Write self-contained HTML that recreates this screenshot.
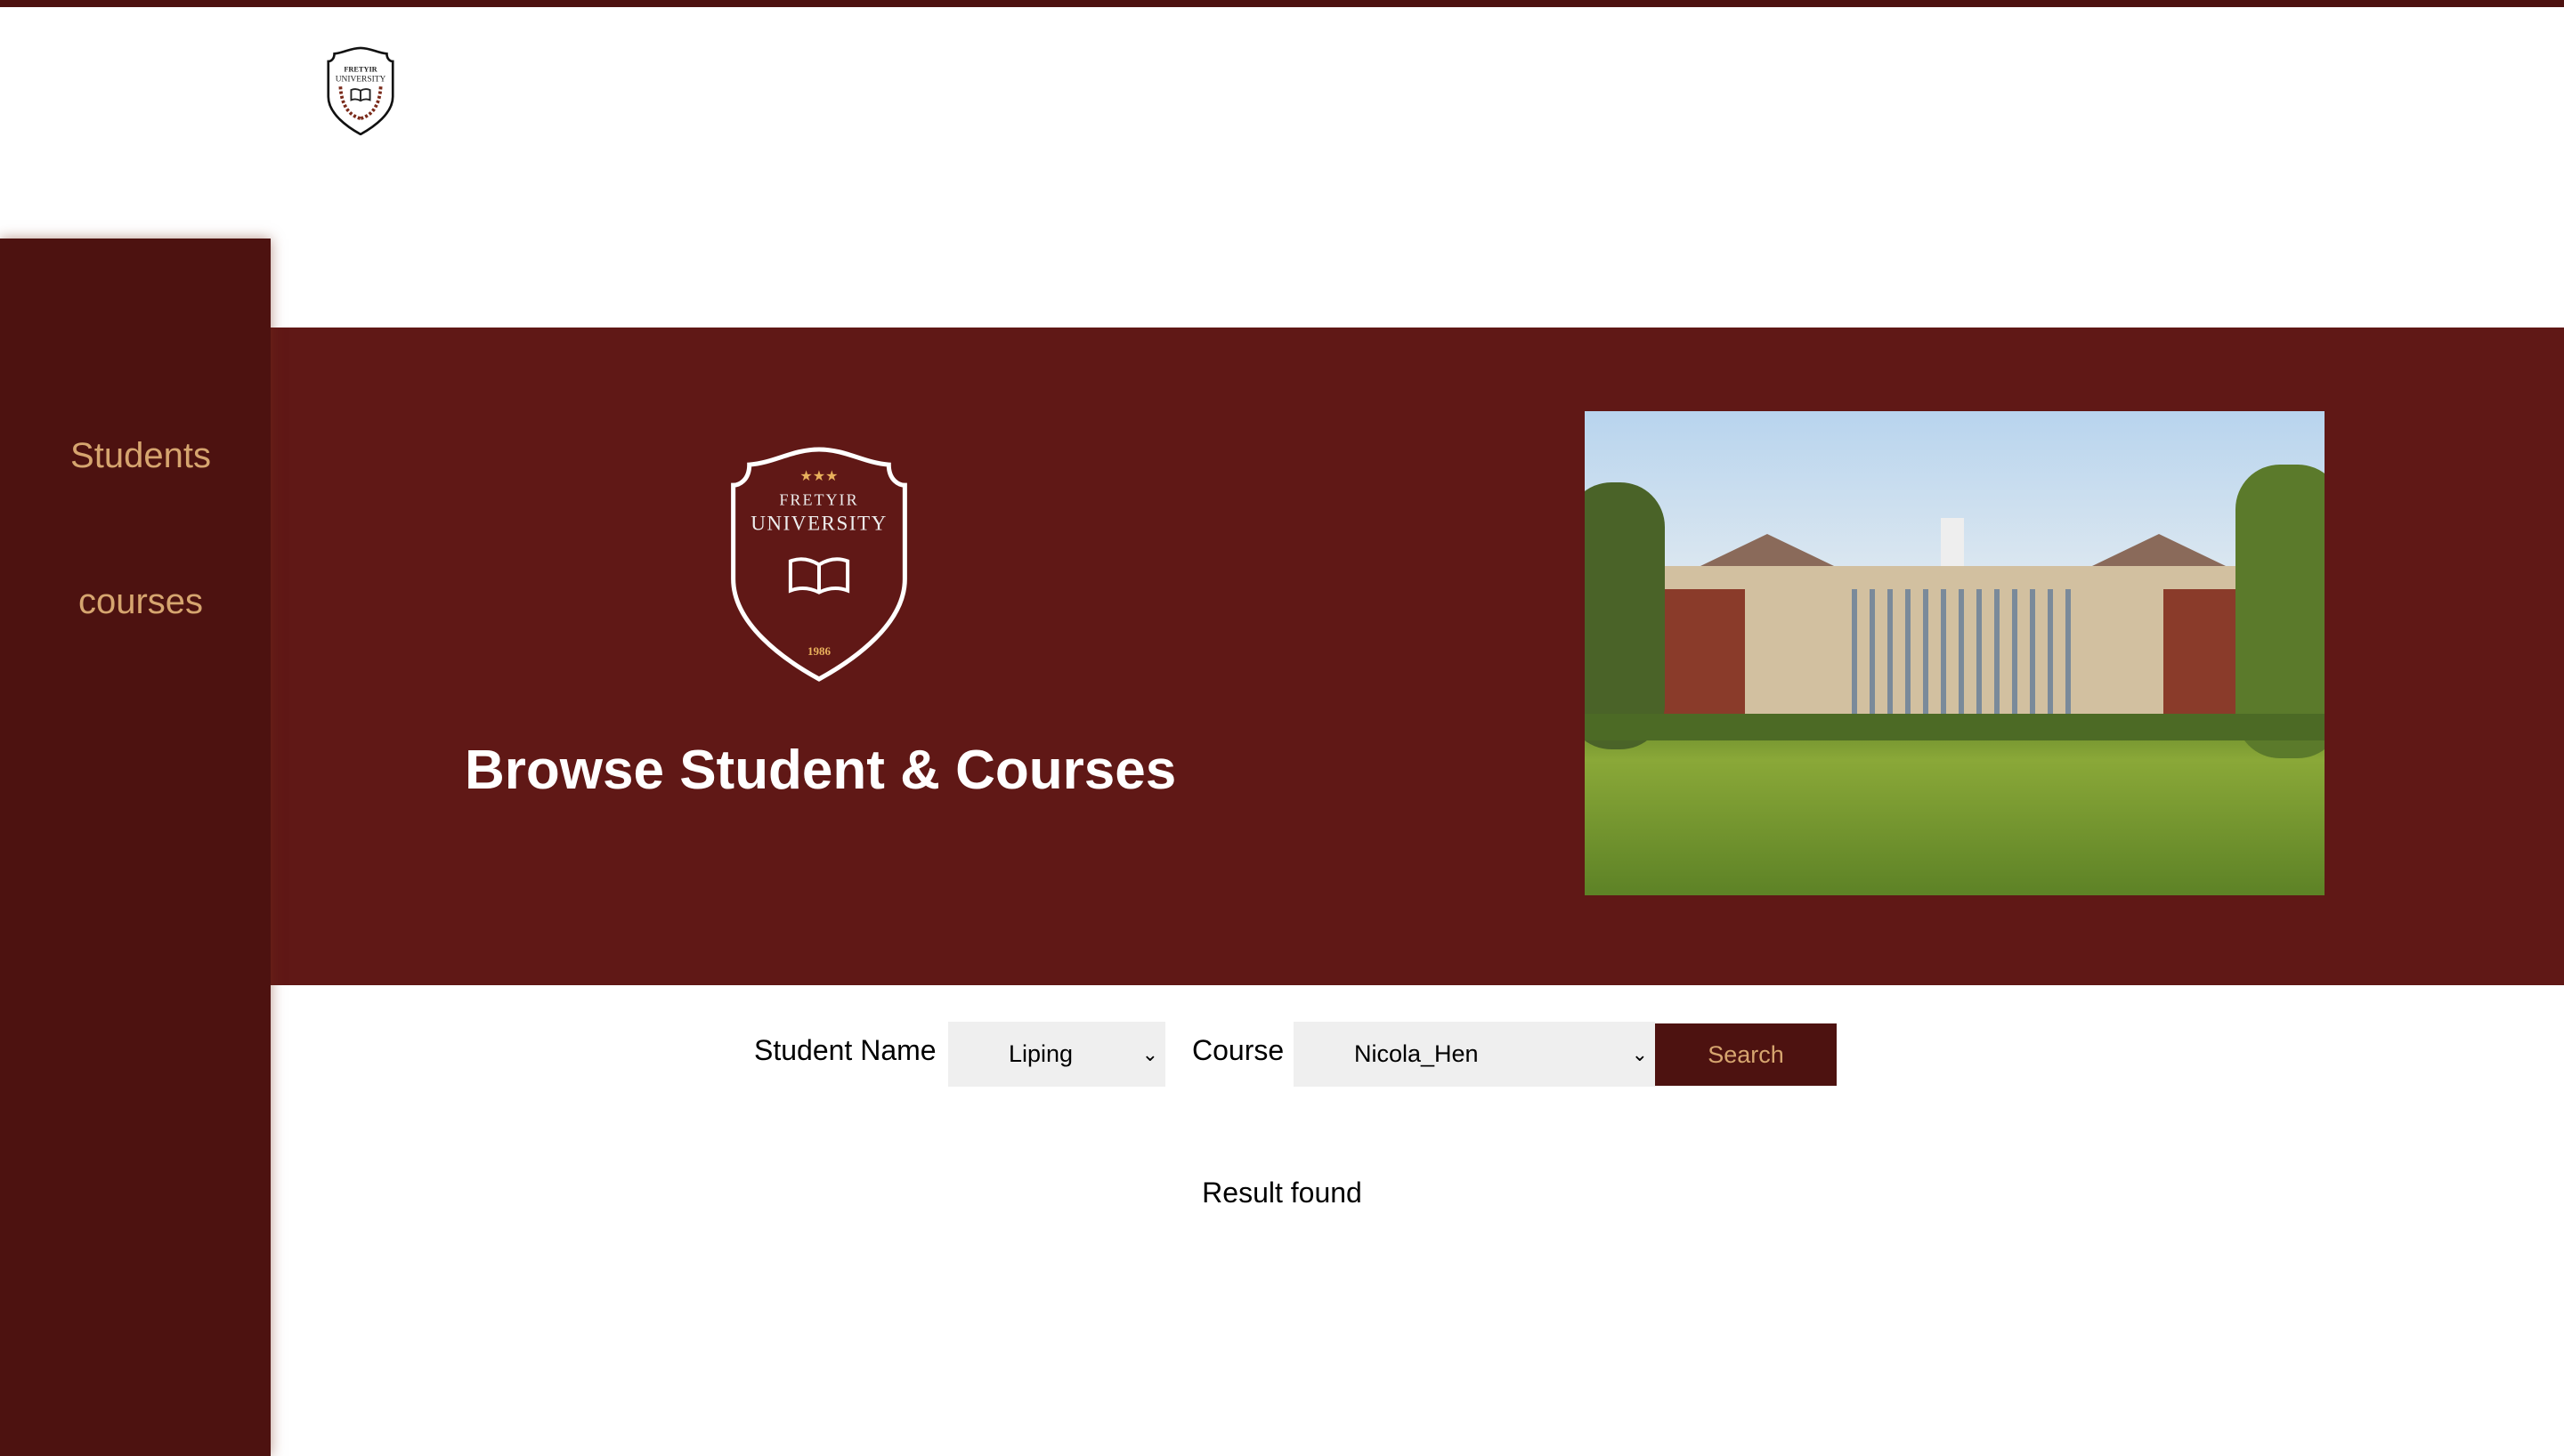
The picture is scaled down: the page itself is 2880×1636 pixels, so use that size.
<!DOCTYPE html>
<html><head><meta charset="utf-8"><style>
*{margin:0;padding:0;box-sizing:border-box}
body{width:2880px;height:1636px;position:relative;background:#fff;font-family:"Liberation Sans",sans-serif;overflow:hidden}
.top{position:absolute;left:0;top:0;width:2880px;height:8px;background:#4d1210}
.side{position:absolute;left:0;top:268px;width:304px;height:1368px;background:#4d1210;box-shadow:0 0 14px rgba(120,50,30,.5);z-index:2}
.side div{position:absolute;left:6px;width:304px;text-align:center;color:#d6a56f;font-size:40px}
.banner{position:absolute;left:304px;top:368px;width:2576px;height:739px;background:#601816}
.title{position:absolute;left:522px;top:830px;color:#fff;font-weight:bold;font-size:62px;white-space:nowrap}
.photo{position:absolute;left:1780px;top:462px;width:831px;height:544px;overflow:hidden;background:linear-gradient(#b8d4ee 0%,#dde8f0 35%,#c9c3a8 55%,#6a8a2c 64%,#8aa838 72%,#5d8226 100%)}
.lbl{position:absolute;font-size:32px;color:#000;top:1162px}
.sel{position:absolute;top:1148px;height:73px;background:#efefef;font-size:27px;line-height:73px}
.btn{position:absolute;left:1859px;top:1150px;width:204px;height:70px;background:#4d1210;color:#d6a56f;font-size:27px;line-height:70px;text-align:center}
</style></head><body>
<div class="top"></div>
<svg style="position:absolute;left:367px;top:52px" width="76" height="100" viewBox="0 0 200 265">
<path d="M100 5 C70 5 50 20 22 22 C22 40 10 45 4 45 L4 150 C4 200 60 240 100 262 C140 240 196 200 196 150 L196 45 C190 45 178 40 178 22 C150 20 130 5 100 5Z" fill="#fff" stroke="#111" stroke-width="7"/>
<text x="100" y="75" font-family="Liberation Serif" font-size="22" text-anchor="middle" fill="#222" font-weight="bold">FRETYIR</text>
<text x="100" y="105" font-family="Liberation Serif" font-size="25" text-anchor="middle" fill="#222">UNIVERSITY</text>
<path d="M72 130 Q86 124 100 132 Q114 124 128 130 L128 160 Q114 154 100 162 Q86 154 72 160Z M100 132 V162" fill="none" stroke="#222" stroke-width="5"/>
<path d="M40 120 Q45 200 100 215 M160 120 Q155 200 100 215" fill="none" stroke="#7a2a1a" stroke-width="10" stroke-dasharray="8 6"/>
</svg>
<div class="side"><div style="top:222px">Students</div><div style="top:386px">courses</div></div>
<div class="banner"></div>
<svg style="position:absolute;left:819px;top:500px" width="202" height="266" viewBox="0 0 200 265">
<path d="M100 5 C70 5 50 20 22 22 C22 40 10 45 4 45 L4 150 C4 200 60 240 100 262 C140 240 196 200 196 150 L196 45 C190 45 178 40 178 22 C150 20 130 5 100 5Z" fill="#601816" stroke="#fff" stroke-width="5"/>
<text x="100" y="40" font-size="16" text-anchor="middle" fill="#e9b15c">★★★</text>
<text x="100" y="67" font-family="Liberation Serif" font-size="18" text-anchor="middle" fill="#eee" letter-spacing="2">FRETYIR</text>
<text x="100" y="95" font-family="Liberation Serif" font-size="23" text-anchor="middle" fill="#eee" letter-spacing="1.5">UNIVERSITY</text>
<path d="M68 130 Q84 124 100 134 Q116 124 132 130 L132 163 Q116 157 100 165 Q84 157 68 163Z M100 134 V165" fill="none" stroke="#fff" stroke-width="4"/>
<text x="100" y="235" font-family="Liberation Serif" font-size="13" font-weight="bold" text-anchor="middle" fill="#e9b15c">1986</text>
</svg>
<div class="title">Browse Student &amp; Courses</div>
<div class="photo">
<div style="position:absolute;left:130px;top:138px;width:0;height:0;border-left:75px solid transparent;border-right:75px solid transparent;border-bottom:36px solid #8a6a5a"></div>
<div style="position:absolute;left:570px;top:138px;width:0;height:0;border-left:75px solid transparent;border-right:75px solid transparent;border-bottom:36px solid #8a6a5a"></div>
<div style="position:absolute;left:400px;top:120px;width:26px;height:55px;background:#eee"></div>
<div style="position:absolute;left:70px;top:174px;width:690px;height:175px;background:#d2c0a0"></div>
<div style="position:absolute;left:70px;top:200px;width:110px;height:150px;background:#8a3b2a"></div>
<div style="position:absolute;left:650px;top:200px;width:110px;height:150px;background:#8a3b2a"></div>
<div style="position:absolute;left:300px;top:200px;width:250px;height:140px;background:repeating-linear-gradient(90deg,#7a8a9a 0 6px,#d2c0a0 6px 20px)"></div>
<div style="position:absolute;left:-20px;top:80px;width:110px;height:300px;background:#4a6328;border-radius:50px"></div>
<div style="position:absolute;right:-20px;top:60px;width:120px;height:330px;background:#5b7a2b;border-radius:50px"></div>
<div style="position:absolute;left:0;top:340px;width:831px;height:30px;background:#4c6a25"></div>
</div>
<div class="lbl" style="left:847px">Student Name</div>
<div class="sel" style="left:1065px;width:244px;padding-left:68px">Liping<span style="position:absolute;right:8px;font-size:22px">⌄</span></div>
<div class="lbl" style="left:1339px">Course</div>
<div class="sel" style="left:1453px;width:406px;padding-left:68px">Nicola_Hen<span style="position:absolute;right:8px;font-size:22px">⌄</span></div>
<div class="btn">Search</div>
<div style="position:absolute;left:0;width:2880px;text-align:center;top:1322px;font-size:32px">Result found</div>
</body></html>
